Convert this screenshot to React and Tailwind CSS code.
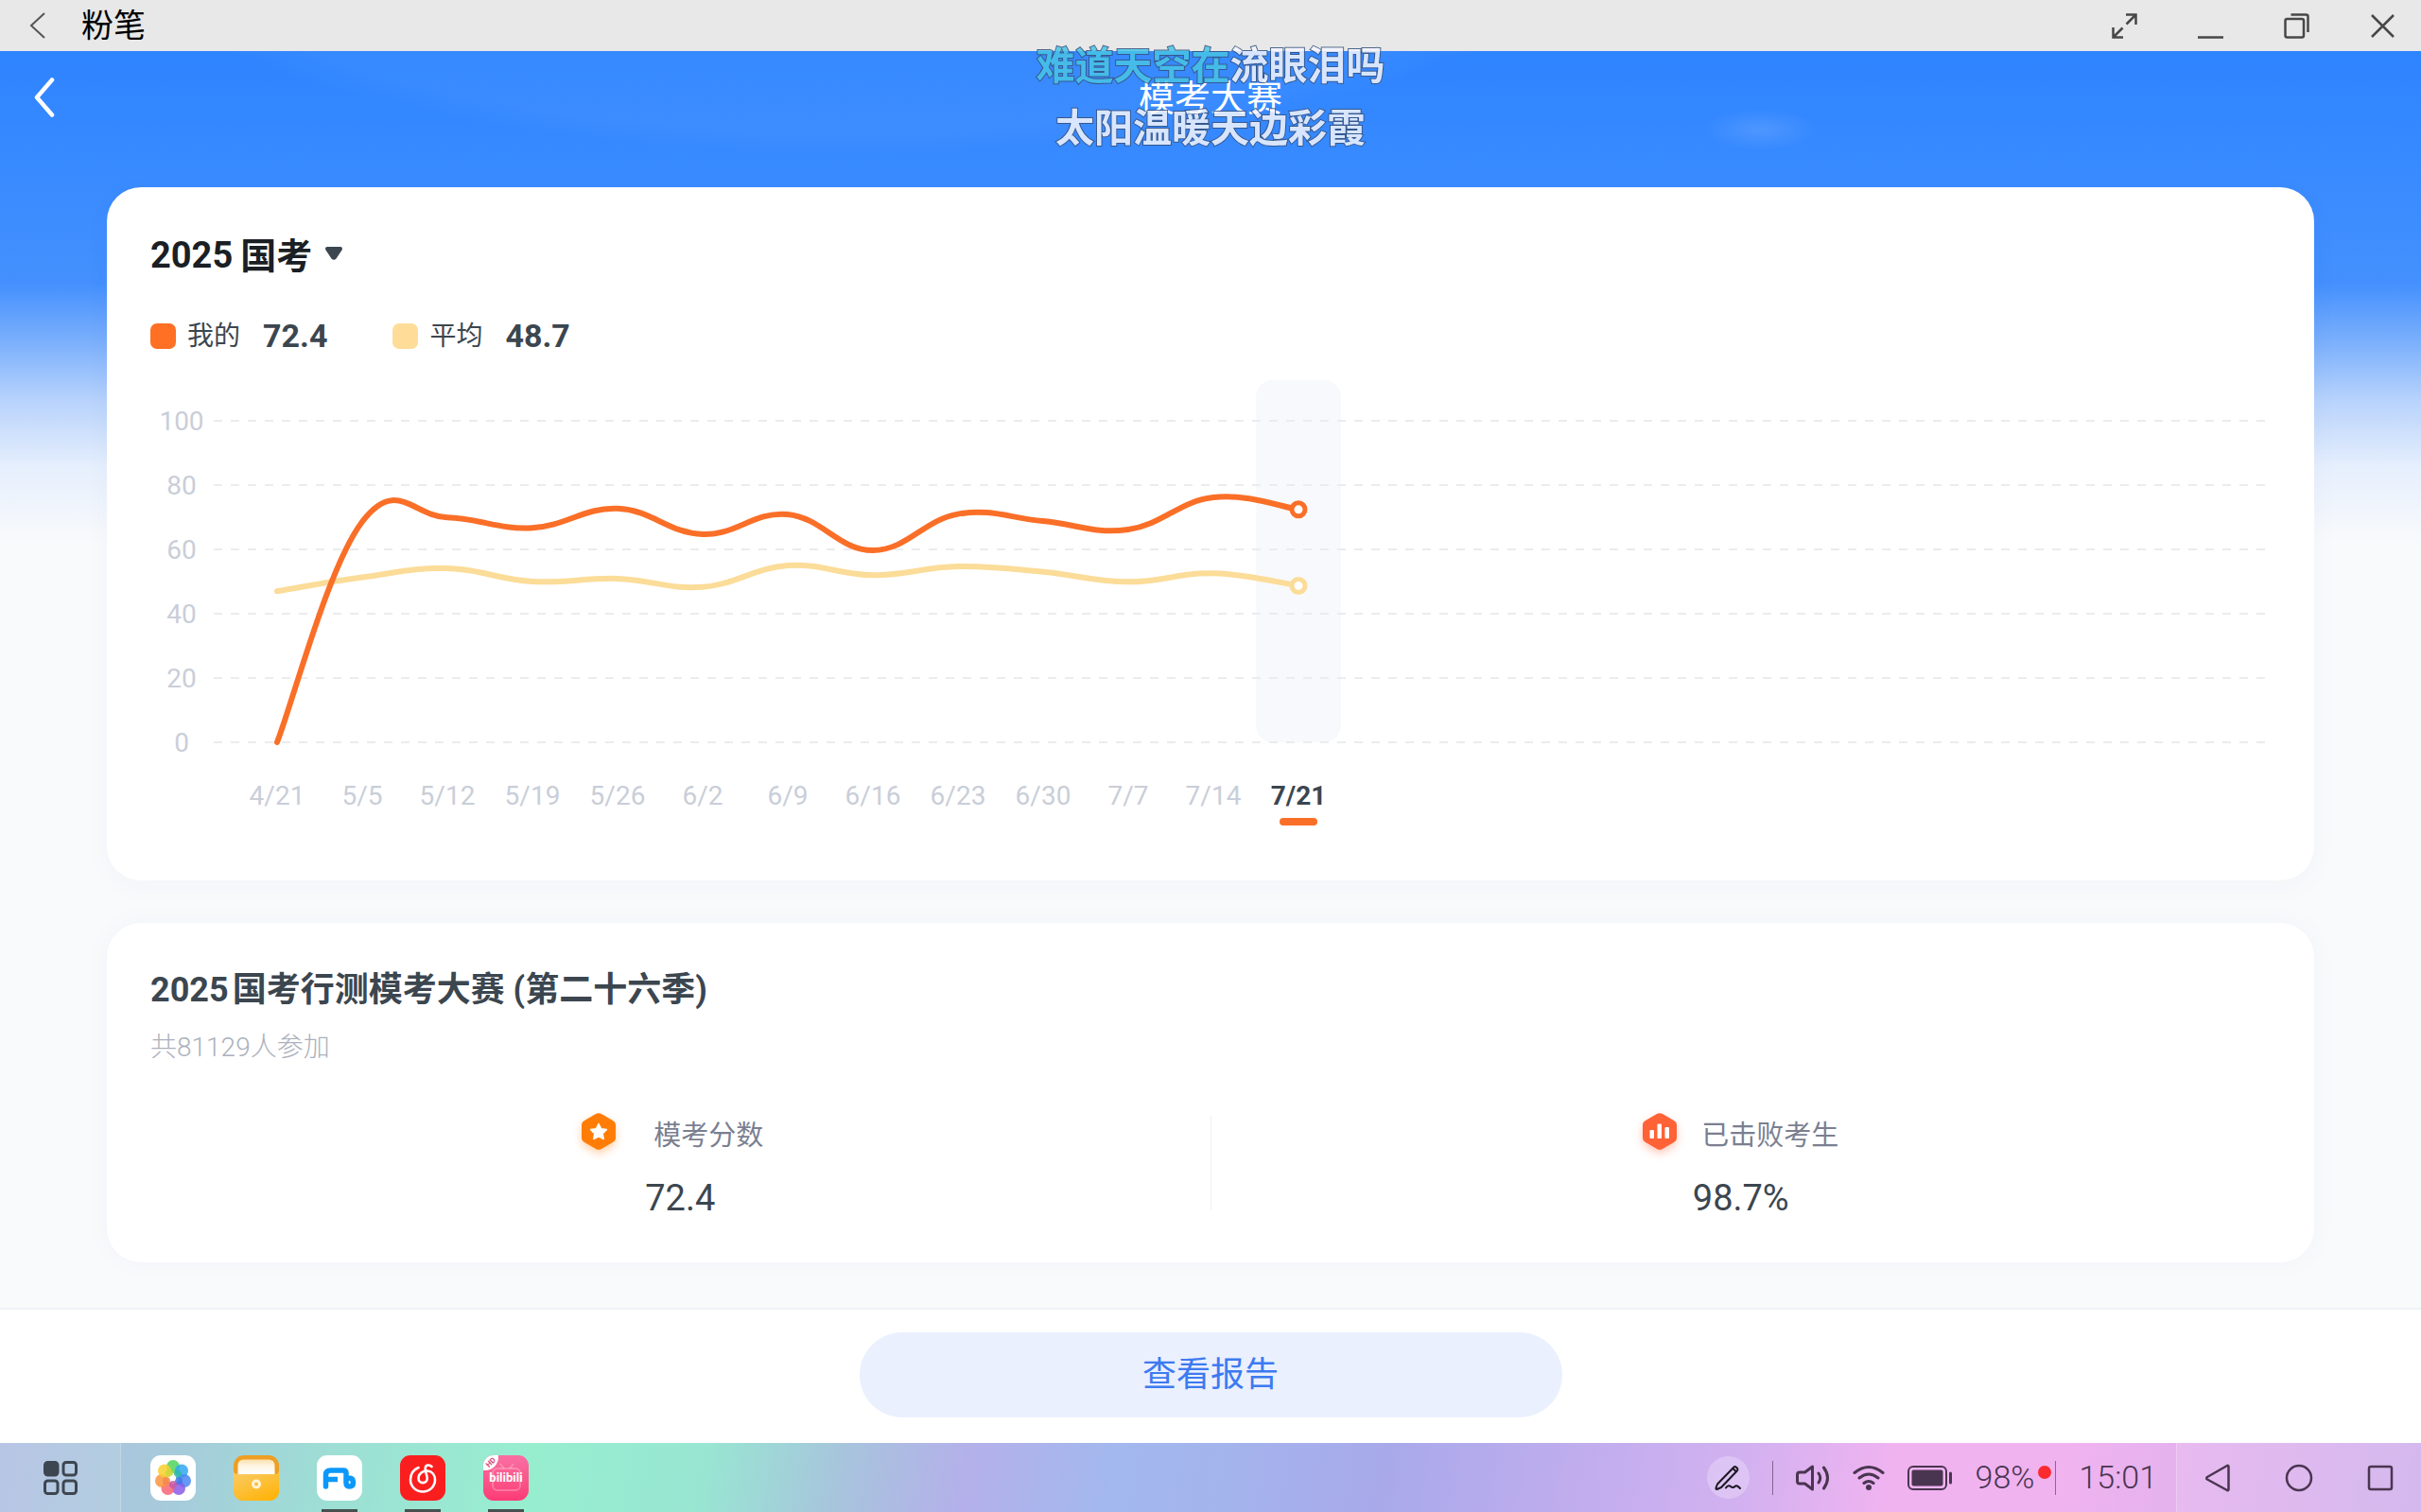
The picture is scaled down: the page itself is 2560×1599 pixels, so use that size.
const dates = ['4/21', '5/5', '5/12', '5/19', '5/26', '6/2', '6/9', '6/16', '6/23', '6/30', '7/7', '7/14', '7/21'];
const mine = [0, 68.6, 69.9, 66.7, 72.7, 64.7, 70.9, 59.7, 71, 68.8, 66.2, 76.2, 72.4];
const average = [47, 51.3, 54.1, 50, 50.9, 48.3, 55, 52, 54.7, 53, 49.9, 52.6, 48.7];
const ticks = [100, 80, 60, 40, 20, 0];

const STEP = 90;
const FIRST_X = 68;
const BASE_Y = 383;
const UNIT = 3.4;

function toPoint(value, i) {
  return { x: FIRST_X + i * STEP, y: BASE_Y - value * UNIT };
}

// cubic smoothing with a 0.2 tension
function smoothPath(values) {
  const pts = values.map(toPoint);
  let d = `M${pts[0].x} ${pts[0].y}`;
  for (let i = 0; i < pts.length - 1; i++) {
    const prev = pts[i - 1] || pts[i];
    const cur = pts[i];
    const next = pts[i + 1];
    const after = pts[i + 2] || next;
    d += ` C${cur.x + (next.x - prev.x) * 0.2} ${cur.y + (next.y - prev.y) * 0.2}`;
    d += ` ${next.x - (after.x - cur.x) * 0.2} ${next.y - (after.y - cur.y) * 0.2}`;
    d += ` ${next.x} ${next.y}`;
  }
  return d;
}

function WindowBar() {
  const icon = 'block size-[27px] fill-none stroke-[#474747] stroke-[2.5]';
  return (
    <div className="flex h-[54px] shrink-0 items-center bg-[#e8e8e8] pr-[27px] pl-[30px]">
      <button aria-label="返回上一个应用">
        <svg viewBox="0 0 20 28" className="block h-7 w-5 fill-none stroke-[#555] stroke-2">
          <path d="M17 1 3 14l14 13" />
        </svg>
      </button>
      <span className="ml-9 text-[34px] leading-[56px] text-black">粉笔</span>
      <div className="ml-auto flex gap-16">
        <button aria-label="全屏">
          <svg viewBox="0 0 27 27" className={icon}>
            <path d="M15 1.500h10.500V12M25.500 1.500 15.500 11.500M12 25.500H1.500V15M1.500 25.500l10-10" />
          </svg>
        </button>
        <button aria-label="最小化">
          <svg viewBox="0 0 27 27" className={icon}>
            <path d="M0 25.500h27" />
          </svg>
        </button>
        <button aria-label="还原">
          <svg viewBox="0 0 27 27" className={icon}>
            <rect x="1.500" y="6" width="19.500" height="19.500" rx="2" />
            <path d="M7.500 1.500H23.500q2 0 2 2v16.500" />
          </svg>
        </button>
        <button aria-label="关闭">
          <svg viewBox="0 0 27 27" className={icon}>
            <path d="m2 2 23 23M25 2 2 25" />
          </svg>
        </button>
      </div>
    </div>
  );
}

function Lyrics() {
  return (
    <div className="pointer-events-none absolute inset-x-0 top-[37px] z-10 text-center text-[41px] leading-[66px] font-bold text-[#f4f6ff] opacity-85 [-webkit-text-stroke:2px_#36517c] [paint-order:stroke_fill]">
      <p>
        <span className="text-[#48c4e6]">难道天空在</span>流眼泪吗
      </p>
      <p>太阳温暖天边彩霞</p>
    </div>
  );
}

function LegendItem({ color, label, value }) {
  return (
    <div className="flex items-center text-[#3c464f]">
      <span className={`size-[27px] rounded-[7px] ${color}`} />
      <span className="ml-3 pt-0.5 text-[28px]">{label}</span>
      <span className="ml-6 text-[34px] font-bold">{value}</span>
    </div>
  );
}

function EndDot({ values, className }) {
  const last = values.length - 1;
  const { x, y } = toPoint(values[last], last);
  return <circle cx={x} cy={y} r="7" strokeWidth="5" className={className} />;
}

function Chart() {
  const activeX = FIRST_X + (dates.length - 1) * STEP;
  return (
    <div className="mt-[23px]">
      <div className="flex">
        <div className="flex h-[418px] w-[66px] flex-col pt-2.5 text-center text-[28px] leading-[68px] text-[#c9ced8]">
          {ticks.map((tick) => (
            <span key={tick}>{tick}</span>
          ))}
        </div>
        <svg className="h-[418px] min-w-0 flex-1 fill-none">
          <rect x={activeX - 45} y="0" width="90" height="383" rx="18" className="fill-[#f8f9fc]" />
          {ticks.map((tick) => (
            <line
              key={tick}
              x1="1"
              x2="99.8%"
              y1={BASE_Y - tick * UNIT}
              y2={BASE_Y - tick * UNIT}
              strokeDasharray="9 9"
              className="stroke-[#eaecef] stroke-2"
            />
          ))}
          <path d={smoothPath(average)} strokeLinecap="round" className="stroke-[#fbdc98] stroke-6" />
          <path d={smoothPath(mine)} strokeLinecap="round" className="stroke-[#fa6f28] stroke-6" />
          <EndDot values={average} className="fill-white stroke-[#fbdc98]" />
          <EndDot values={mine} className="fill-white stroke-[#fa6f28]" />
        </svg>
      </div>
      <div className="flex pl-[89px]">
        {dates.map((date, i) => {
          const active = i === dates.length - 1;
          return (
            <button key={date} className="flex w-[90px] flex-col items-center">
              <span
                className={
                  active
                    ? 'text-[28px] leading-[44px] font-bold text-[#3c464f]'
                    : 'text-[28px] leading-[44px] text-[#c9ced8]'
                }
              >
                {date}
              </span>
              {active && <span className="mt-px h-2 w-10 rounded-full bg-[#fa6f28]" />}
            </button>
          );
        })}
      </div>
    </div>
  );
}

function TrendCard() {
  return (
    <section className="mt-[46px] rounded-[36px] bg-white px-[46px] pt-10 pb-[58px] shadow-[0_6px_30px_rgba(40,60,100,0.03)]">
      <button className="flex h-16 items-center gap-2 text-[38px] font-bold text-[#1b1f24]">
        <span>2025</span>
        <span className="pt-0.5">国考</span>
        <svg viewBox="0 0 18 14" className="mb-1 ml-1.5 h-3.5 w-[18px] fill-[#3c464f]">
          <path d="M2 0h14q3 .5 1.500 3.500l-6 9q-2.500 2.500-5 0l-6-9Q-1 .5 2 0z" />
        </svg>
      </button>
      <div className="mt-[29px] flex h-12 items-center gap-[69px]">
        <LegendItem color="bg-[#ff6f24]" label="我的" value="72.4" />
        <LegendItem color="bg-[#ffdd99]" label="平均" value="48.7" />
      </div>
      <Chart />
    </section>
  );
}

function ScoreIcon() {
  return (
    <svg viewBox="0 0 36 46" className="h-[46px] w-9 overflow-visible drop-shadow-[0_4px_5px_rgba(255,124,10,0.35)]">
      <path d="M15 1q3-1.700 6 0l12 7q3 1.700 3 5v13q0 3.300-3 5l-12 7q-3 1.700-6 0l-12-7q-3-1.700-3-5V13q0-3.300 3-5z" fill="#ff7d06" />
      <path
        d="m18 11.500 2.600 5.300 5.800.8-4.200 4.100 1 5.800-5.200-2.700-5.200 2.700 1-5.800-4.200-4.100 5.800-.8z"
        fill="#fff"
        stroke="#fff"
        strokeWidth="1.500"
        strokeLinejoin="round"
      />
    </svg>
  );
}

function RankIcon() {
  return (
    <svg viewBox="0 0 36 46" className="h-[46px] w-9 overflow-visible drop-shadow-[0_4px_5px_rgba(255,98,55,0.35)]">
      <path d="M15 1q3-1.700 6 0l12 7q3 1.700 3 5v13q0 3.300-3 5l-12 7q-3 1.700-6 0l-12-7q-3-1.700-3-5V13q0-3.300 3-5z" fill="#ff6237" />
      <g fill="#fff">
        <rect x="7.500" y="18" width="4.500" height="9" rx="1" />
        <rect x="15.500" y="11.500" width="4.500" height="15.500" rx="1" />
        <rect x="23.500" y="15" width="4.500" height="12" rx="1" />
      </g>
    </svg>
  );
}

function ContestCard() {
  return (
    <section className="mt-[45px] rounded-[36px] bg-white px-[46px] pt-11 pb-[41px] shadow-[0_0_30px_rgba(40,60,100,0.03)]">
      <h2 className="text-[36px] leading-[54px] font-bold text-[#3c464f]">
        <span className="mr-1">2025</span>国考行测模考大赛 (第二十六季)
      </h2>
      <p className="mt-3 text-[28px] leading-[44px] font-light text-[#abb1bc]">共81129人参加</p>
      <div className="mt-[50px] flex">
        <div className="flex flex-1 flex-col items-center gap-5">
          <div className="flex h-10 items-center gap-10 pr-4">
            <ScoreIcon />
            <span className="pt-[3px] text-[29px] text-[#7b7f90]">模考分数</span>
          </div>
          <span className="text-[38px] leading-[54px] text-[#3c464f]">72.4</span>
        </div>
        <div className="h-[100px] w-px bg-[#eef0f3]" />
        <div className="flex flex-1 flex-col items-center gap-5">
          <div className="flex h-10 items-center gap-[26px]">
            <RankIcon />
            <span className="pt-[3px] text-[29px] text-[#7b7f90]">已击败考生</span>
          </div>
          <span className="text-[38px] leading-[54px] text-[#3c464f]">98.7%</span>
        </div>
      </div>
    </section>
  );
}

function PhotosIcon() {
  return (
    <svg viewBox="0 0 48 48" className="block size-12">
      <rect width="48" height="48" rx="11" fill="#fff" />
      <g fillOpacity="0.85">
        <circle cx="24" cy="12" r="7" fill="#4fd35c" />
        <circle cx="33" cy="16.500" r="7" fill="#2fa8f0" />
        <circle cx="36" cy="27" r="7" fill="#4a86f2" />
        <circle cx="30" cy="35" r="7" fill="#8a5ce8" />
        <circle cx="18.500" cy="35" r="7" fill="#f76474" />
        <circle cx="12" cy="27" r="7" fill="#fa9440" />
        <circle cx="15" cy="16.500" r="7" fill="#f9cf2e" />
        <circle cx="20" cy="19" r="4" fill="#c8d83a" />
        <circle cx="29" cy="20" r="4" fill="#2fb8a8" />
        <circle cx="30" cy="27" r="4" fill="#3f78e8" />
        <circle cx="24" cy="31" r="4" fill="#c65aa8" />
        <circle cx="17" cy="27" r="4" fill="#f28a4a" />
      </g>
      <circle cx="24" cy="24" r="3" fill="#fff" />
    </svg>
  );
}

function FilesIcon() {
  return (
    <svg viewBox="0 0 48 48" className="block size-12">
      <defs>
        <linearGradient id="files-front" x1="0" y1="0" x2="0.6" y2="1">
          <stop offset="0" stopColor="#f9cd6c" />
          <stop offset="1" stopColor="#ffb50f" />
        </linearGradient>
        <linearGradient id="files-paper" x1="0" y1="0" x2="0" y2="1">
          <stop offset="0" stopColor="#fbe0ac" />
          <stop offset="0.4" stopColor="#fdf3df" />
          <stop offset="1" stopColor="#fff" />
        </linearGradient>
      </defs>
      <rect width="48" height="48" rx="11" fill="#ee9e22" />
      <path d="M4.500 20v-9q0-6.500 6.500-6.500h26q6.500 0 6.500 6.500v9z" fill="url(#files-paper)" />
      <path d="M0 16q0 4 4.500 4h39q4.500 0 4.500-4v21q0 11-11 11H11Q0 48 0 37z" fill="url(#files-front)" />
      <circle cx="24" cy="30.500" r="3.500" fill="none" stroke="#fff4d8" strokeWidth="3" />
    </svg>
  );
}

function FenbiIcon() {
  return (
    <svg viewBox="0 0 48 48" className="block size-12">
      <rect width="48" height="48" rx="11" fill="#fff" />
      <g fill="none" stroke="#0c98fb" strokeWidth="5.500">
        <path d="M9.500 33V21q0-5 5-5H28q3 0 3 3v10q0 4 3.500 4 4 0 4-4.500t-5-4.500" strokeLinecap="round" />
        <path d="M10 25.500h12" />
      </g>
    </svg>
  );
}

function MusicIcon() {
  return (
    <svg viewBox="0 0 48 48" className="block size-12">
      <rect width="48" height="48" rx="11" fill="#fb1e1e" />
      <path
        d="M19.500 13C13.500 15.500 11 20.500 11 26a13 12.500 0 0 0 26 0c0-5-3-9-8-9.500-5-.3-9.500 3-9.500 8a4.600 4.600 0 0 0 9.200 0c0-3-2-7-2-10.500 0-4 4.500-4.500 6.800-2"
        fill="none"
        stroke="#fff"
        strokeWidth="2.600"
        strokeLinecap="round"
      />
    </svg>
  );
}

function BilibiliIcon() {
  return (
    <span className="relative flex size-12 items-center justify-center overflow-hidden rounded-[11px] bg-linear-to-b from-[#f96fa3] to-[#fc3a76]">
      <svg viewBox="0 0 48 48" className="absolute inset-0 size-12 fill-none stroke-white/25 stroke-2">
        <rect x="10" y="14" width="29" height="23" rx="5" />
        <path d="m18 9 4 5M32 9l-4 5" />
      </svg>
      <span className="absolute top-0 left-0 flex size-4 items-center justify-center rounded-br-[14px] bg-white text-[8px] font-bold text-[#d84a7e]">
        <span className="-rotate-45">HD</span>
      </span>
      <span className="relative text-[13px] font-bold text-white">bilibili</span>
    </span>
  );
}

const apps = [
  { name: '相册', Icon: PhotosIcon },
  { name: '文件管理', Icon: FilesIcon },
  { name: '粉笔', Icon: FenbiIcon, running: true },
  { name: '网易云音乐', Icon: MusicIcon, running: true },
  { name: '哔哩哔哩', Icon: BilibiliIcon, running: true },
];

function StatusArea() {
  return (
    <div className="ml-auto flex items-center gap-6 pr-5 text-[34px] font-light text-[#4a3550]">
      <button aria-label="手写笔" className="flex size-[45px] items-center justify-center rounded-full bg-white/25">
        <svg viewBox="0 0 28 28" className="size-7 fill-none stroke-[#1c1620] stroke-2" strokeLinecap="round" strokeLinejoin="round">
          <path d="m3 20.500 17.500-18q1-1 2.500.2l1 1q1 1.300 0 2.500L7 24l-4.500 2q-1.300 0-1-1.500zM20 4.500l2.800 2.800" />
          <path d="M12 24.500q2.500-3.500 5-1.500t4.500 0 5.500 2" />
        </svg>
      </button>
      <span className="h-9 w-px bg-[#4a3550]/60" />
      <svg viewBox="0 0 36 28" className="h-7 w-9 fill-none stroke-[#4a3550] stroke-3" strokeLinecap="round" strokeLinejoin="round">
        <path d="M17.500 2v24l-8-6H4q-2.500 0-2.500-2.500v-7Q1.500 8 4 8h5.500z" />
        <path d="M24 9q3.500 5 0 10M29.500 3q8 11 0 22" />
      </svg>
      <svg viewBox="0 0 34 28" className="h-7 w-[34px] fill-none stroke-[#4a3550] stroke-3" strokeLinecap="round">
        <path d="M2 8.500q15-12 30 0M7 14q10-8 20 0M12 19.500q5-4 10 0" />
        <circle cx="17" cy="24" r="3" className="fill-[#4a3550] stroke-none" />
      </svg>
      <svg viewBox="0 0 48 26" className="h-[26px] w-12">
        <rect x="1" y="1" width="40" height="24" rx="5" fill="none" stroke="#4a3550" strokeWidth="2" />
        <rect x="4.500" y="4.500" width="33" height="17" rx="2" fill="#4a3550" />
        <rect x="44" y="6.500" width="3" height="13" rx="1.500" fill="#4a3550" />
      </svg>
      <div className="flex items-center gap-1">
        <span>98%</span>
        <span className="mb-3 size-3.5 rounded-full bg-[#fb2b30]" />
        <span className="h-9 w-px bg-[#4a3550]/60" />
      </div>
      <time>15:01</time>
    </div>
  );
}

function Taskbar() {
  const nav = 'flex h-full w-[86px] items-center justify-center';
  return (
    <div className="flex h-[73px] shrink-0 bg-[linear-gradient(100deg,#b0bfe2_0%,#a7cadb_7%,#9ddfd5_14%,#97eecf_22%,#98e6d2_29%,#a8c3dd_35%,#b4b0ea_40%,#a2b8ee_46%,#a4b3ec_51%,#a8a9ea_57%,#c0adee_65%,#d3b1f0_72%,#f0b3f0_78%,#f0b3f0_85%,#e6b2ee_89%,#cfb1ec_100%)]">
      <button aria-label="全部应用" className="flex w-32 items-center justify-center border-r border-white/20 bg-white/10">
        <svg viewBox="0 0 36 36" className="size-9 fill-none stroke-[#3d4650] stroke-3">
          <rect x="1.500" y="1.500" width="13.500" height="13.500" rx="3" className="fill-[#3d4650]" />
          <rect x="21" y="1.500" width="13.500" height="13.500" rx="3" />
          <rect x="1.500" y="21" width="13.500" height="13.500" rx="3" />
          <rect x="21" y="21" width="13.500" height="13.500" rx="3" />
        </svg>
      </button>
      <div className="ml-[31px] flex gap-10">
        {apps.map(({ name, Icon, running }) => (
          <button key={name} aria-label={name} className="flex flex-col items-center justify-between pt-[13px]">
            <Icon />
            {running && <span className="h-[3px] w-[38px] bg-[#46514f]" />}
          </button>
        ))}
      </div>
      <StatusArea />
      <div className="flex border-l border-white/25 bg-white/10 fill-none stroke-[#4a3550] stroke-[2.5]">
        <button aria-label="返回" className={nav}>
          <svg viewBox="0 0 28 30" className="h-[30px] w-7 fill-none" strokeLinejoin="round">
            <path d="M25.500 3v24q0 1.500-1.500 1L3 16.500q-1.500-1 0-2.500L24 2q1.500-.5 1.500 1z" />
          </svg>
        </button>
        <button aria-label="主页" className={nav}>
          <svg viewBox="0 0 30 30" className="size-[30px] fill-none">
            <circle cx="15" cy="15" r="13" />
          </svg>
        </button>
        <button aria-label="多任务" className={nav}>
          <svg viewBox="0 0 30 30" className="size-[30px] fill-none">
            <rect x="3" y="3" width="24" height="24" rx="2" />
          </svg>
        </button>
      </div>
    </div>
  );
}

export default function App() {
  return (
    <div className="relative flex min-h-screen flex-col bg-[#f9fafd] font-['Roboto','Noto_Sans_CJK_SC',sans-serif]">
      <WindowBar />
      <Lyrics />
      <main className="flex-1 bg-[radial-gradient(60px_22px_at_1862px_83px,rgba(255,255,255,0.12),transparent),radial-gradient(850px_290px_at_900px_-180px,rgba(255,255,255,0.04)_92%,transparent),linear-gradient(180deg,#2e84ff_0px,#3a8bff_140px,#4490fe_246px,#7db1fc_310px,#b8d3fc_370px,#e6effd_440px,#f9fafc_520px)]">
        <header className="relative flex h-[98px] items-center justify-center">
          <button aria-label="返回" className="absolute left-[35px]">
            <svg viewBox="0 0 24 42" className="block h-[42px] w-6 fill-none stroke-white stroke-[4.5]" strokeLinecap="round" strokeLinejoin="round">
              <path d="M20 2.500 4 21l16 18.500" />
            </svg>
          </button>
          <h1 className="pt-[3px] text-[38px] text-white">模考大赛</h1>
        </header>
        <div className="px-[113px]">
          <TrendCard />
          <ContestCard />
        </div>
      </main>
      <footer className="flex h-[143px] shrink-0 items-center justify-center border-t-2 border-[#f0f2f5] bg-white pb-1">
        <button className="h-[90px] w-[743px] rounded-full bg-[#eaf0fe] text-[36px] text-[#3d7af0]">查看报告</button>
      </footer>
      <Taskbar />
    </div>
  );
}
